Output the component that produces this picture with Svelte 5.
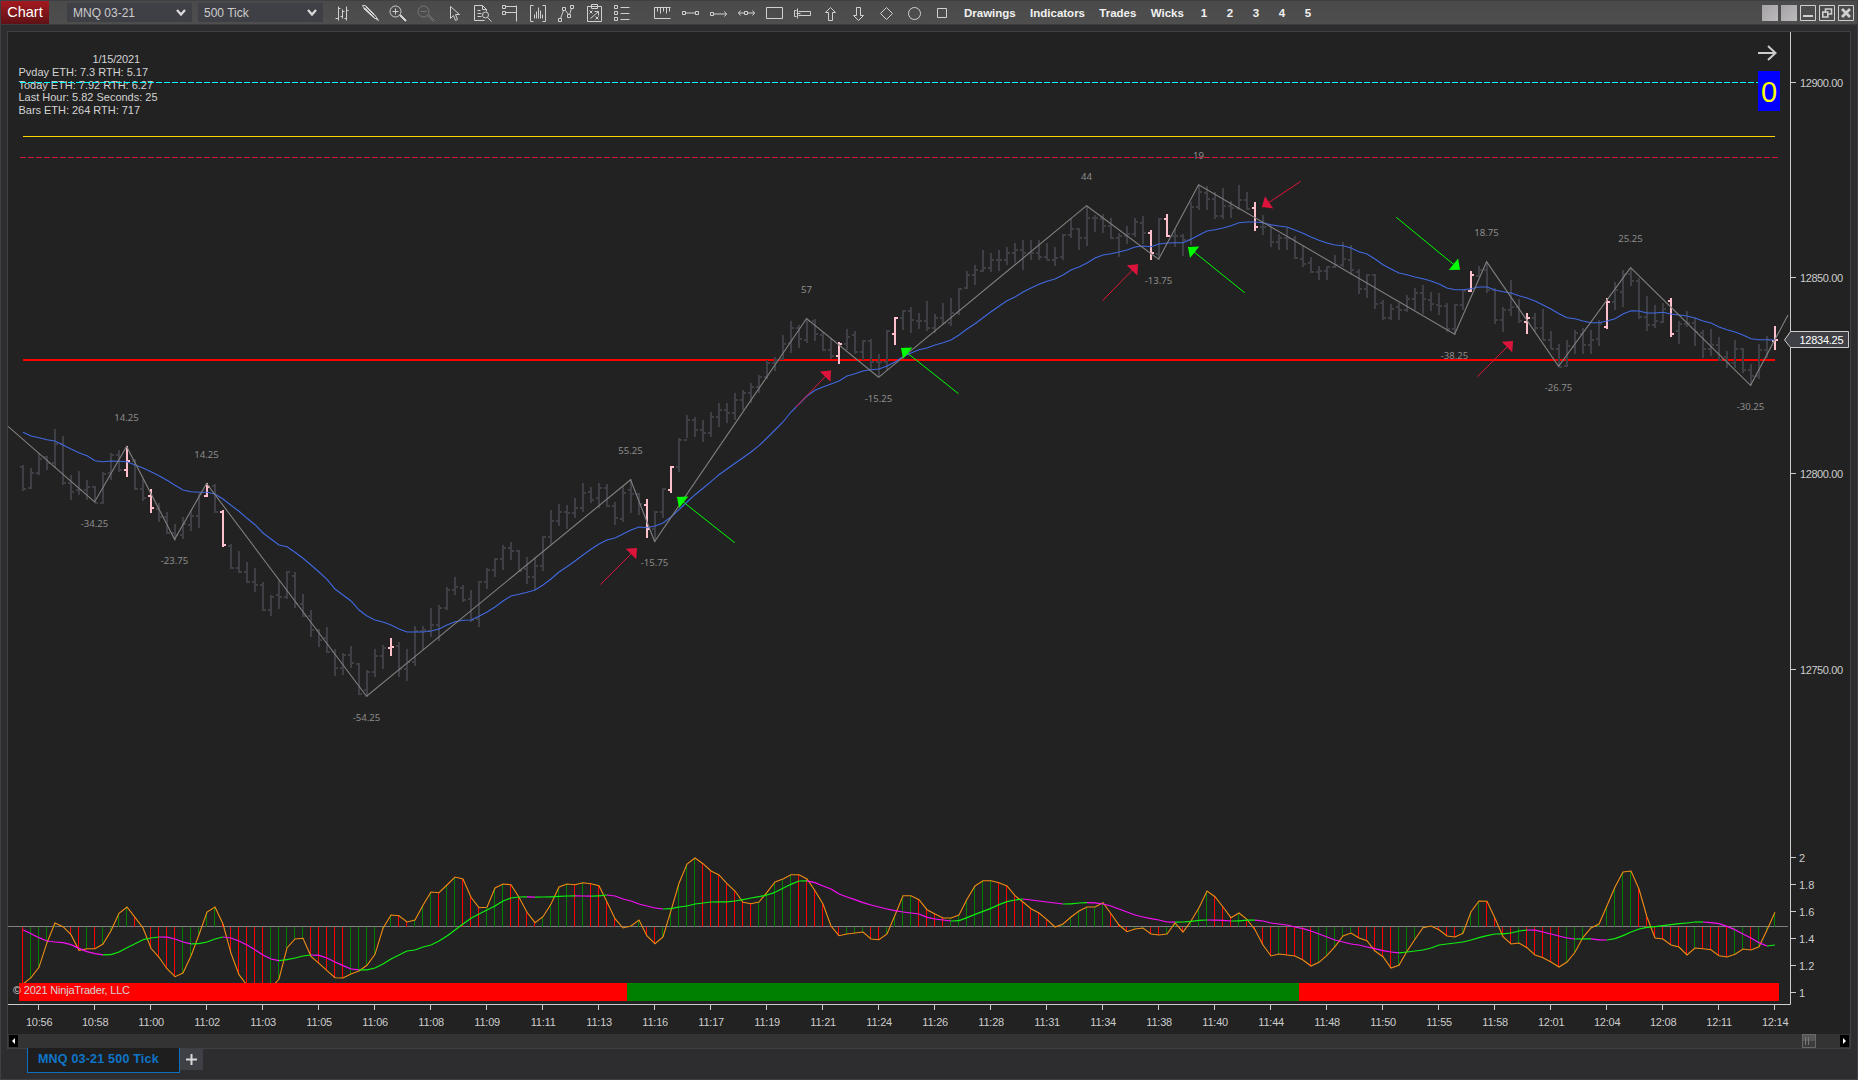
<script lang="ts">
	type Bar = [number, number, number, number];

	const x = (i: number) => 23 + i * 8;

	// [high, low, open, close] in thirds of a pixel below `top`
	const barGroups: { top: number; rows: Bar[] }[] = [
		{
			top: 400,
			rows: [
				[196, 272, 201, 268], [204, 266, 264, 219], [160, 224, 219, 177], [168, 210, 172, 190], [87, 205, 189, 132],
				[108, 254, 132, 249], [225, 299, 249, 275], [213, 284, 270, 270], [240, 300, 269, 261], [259, 309, 261, 309],
				[216, 311, 309, 222], [159, 240, 219, 165], [150, 215, 165, 210], [138, 231, 210, 184], [177, 269, 184, 267],
				[236, 302, 267, 293], [267, 339, 288, 324], [309, 366, 326, 350], [336, 402, 351, 399], [372, 422, 399, 405],
				[351, 417, 405, 372], [330, 393, 374, 348], [282, 384, 348, 282], [249, 291, 288, 260], [252, 338, 258, 336],
				[330, 441, 336, 435], [432, 506, 438, 504], [453, 518, 504, 516], [486, 548, 516, 546], [503, 575, 546, 555],
				[546, 632, 555, 630], [585, 648, 630, 591], [540, 627, 585, 591], [513, 597, 591, 516], [516, 624, 527, 612],
				[582, 651, 612, 648], [630, 711, 648, 690], [687, 741, 690, 720], [681, 759, 714, 756], [747, 828, 756, 804],
				[759, 825, 804, 765], [738, 803, 765, 789], [789, 885, 792, 882], [810, 890, 870, 816], [747, 831, 815, 768],
				[735, 807, 768, 744], [714, 768, 744, 741], [726, 831, 738, 807], [747, 843, 807, 786]
			]
		},
		{
			top: 440,
			rows: [
				[558, 678, 666, 573], [558, 630, 573, 570], [504, 591, 573, 555], [495, 603, 555, 504], [441, 510, 504, 450],
				[411, 465, 450, 441], [435, 486, 444, 480], [450, 546, 476, 540], [423, 561, 538, 426], [384, 446, 426, 390],
				[354, 411, 390, 357], [315, 390, 357, 324], [306, 360, 324, 333], [330, 396, 333, 393], [351, 432, 388, 411],
				[351, 450, 411, 378], [288, 393, 378, 291], [210, 315, 291, 243], [192, 258, 243, 216], [195, 267, 216, 219],
				[174, 234, 219, 204], [129, 216, 204, 159], [141, 188, 156, 180], [129, 204, 174, 144], [132, 201, 144, 198],
				[186, 255, 198, 234], [138, 246, 237, 159], [117, 219, 150, 162], [159, 224, 162, 192], [177, 294, 195, 267],
				[213, 306, 267, 216], [144, 234, 216, 147], [78, 159, 150, 81]
			]
		},
		{
			top: 260,
			rows: [
				[534, 636, 621, 540], [465, 535, 540, 480], [470, 530, 480, 510], [480, 545, 510, 520], [455, 530, 520, 470],
				[430, 500, 470, 450], [430, 490, 450, 460], [400, 480, 460, 420], [390, 450, 420, 400], [370, 430, 400, 380],
				[345, 400, 380, 351], [300, 356, 351, 309], [291, 333, 309, 299], [225, 300, 297, 252], [183, 279, 249, 204],
				[195, 264, 204, 237], [177, 248, 240, 183], [177, 243, 183, 222], [216, 272, 225, 270], [234, 296, 270, 288],
				[246, 312, 288, 252], [207, 270, 252, 231], [213, 282, 225, 276], [240, 300, 276, 243], [237, 330, 242, 306],
				[282, 351, 306, 306], [210, 330, 306, 213], [171, 255, 222, 174], [150, 210, 174, 153], [141, 219, 153, 180],
				[159, 207, 183, 183], [123, 213, 183, 204], [162, 218, 204, 174], [129, 195, 174, 189], [114, 198, 189, 159],
				[84, 165, 159, 87], [33, 87, 84, 45], [15, 75, 45, 30], [-30, 36, 33, 24], [-20, 36, 24, 0],
				[-30, 33, 0, 0], [-40, 15, 0, -20], [-50, 10, -20, -30], [-60, 30, -30, -20], [-60, 0, -20, -20],
				[-60, 0, -20, -10], [-50, 0, -10, 0], [-40, 18, 0, -5]
			]
		},
		{
			top: 140,
			rows: [
				[282, 360, 351, 285], [234, 294, 285, 267], [264, 330, 267, 294], [198, 318, 294, 234], [225, 276, 234, 234],
				[222, 279, 237, 258], [234, 297, 258, 294], [279, 351, 294, 288], [258, 312, 288, 282], [234, 291, 282, 246],
				[228, 312, 249, 279], [270, 360, 279, 339], [234, 360, 342, 237], [222, 291, 237, 288], [267, 321, 288, 288],
				[282, 348, 288, 300], [186, 315, 300, 201], [135, 210, 201, 156], [138, 210, 159, 177], [156, 237, 177, 228],
				[144, 237, 228, 198], [183, 234, 198, 204], [135, 210, 204, 180], [156, 210, 180, 207], [186, 273, 204, 261],
				[225, 285, 261, 261], [255, 321, 255, 306], [282, 330, 306, 294], [264, 330, 294, 294], [288, 357, 297, 354],
				[318, 381, 357, 372], [351, 399, 369, 396], [378, 420, 396, 393], [378, 420, 393, 381], [345, 384, 380, 375],
				[306, 381, 375, 357], [315, 405, 360, 390], [387, 462, 396, 447], [402, 474, 447, 405], [402, 507, 405, 492],
				[480, 540, 489, 534], [492, 540, 534, 507], [489, 540, 501, 510], [465, 516, 510, 477], [444, 510, 477, 459],
				[435, 522, 459, 477], [456, 513, 480, 492], [459, 525, 495, 498], [489, 576, 498, 567], [492, 585, 567, 495]
			]
		},
		{
			top: 200,
			rows: [
				[270, 330, 315, 273], [213, 276, 273, 225], [198, 231, 228, 210], [186, 279, 210, 270], [264, 372, 270, 360],
				[321, 396, 360, 330], [240, 348, 330, 321], [297, 369, 321, 363], [339, 402, 366, 354], [339, 396, 354, 384],
				[327, 420, 384, 420], [393, 447, 420, 447], [432, 501, 447, 501], [420, 500, 498, 438], [390, 462, 441, 399],
				[384, 462, 402, 435], [390, 462, 435, 420], [360, 438, 417, 372], [294, 387, 381, 306], [246, 330, 306, 270],
				[210, 321, 276, 222], [204, 258, 222, 243], [234, 357, 243, 351], [288, 393, 351, 375], [315, 384, 375, 363],
				[309, 369, 366, 327], [294, 411, 303, 402], [363, 432, 393, 372], [333, 381, 372, 369], [354, 438, 369, 396],
				[390, 474, 399, 447], [387, 468, 447, 435], [411, 483, 435, 480], [453, 504, 471, 489], [420, 504, 489, 447],
				[444, 519, 447, 510], [492, 558, 510, 528], [432, 537, 528, 450], [408, 474, 450, 420], [378, 450, 424, 420]
			]
		}
	];

	const highlighted = new Set([13, 16, 23, 25, 46, 78, 81, 102, 109, 141, 143, 154, 181, 188, 198, 206, 219]);

	const bars = barGroups
		.flatMap((g) => g.rows.map((r) => r.map((v) => Math.round(g.top + v / 3))))
		.map(([h, l, o, c], i) => ({ i, h, l, o, c, hot: highlighted.has(i) }));

	const averageGroups = [
		{
			top: 400,
			rows: [
				97, 108, 113, 119, 123, 135, 147, 158, 167, 182, 185, 183, 184, 185, 195, 204, 215, 227, 241, 256, 270, 275, 277, 277,
				282, 297, 316, 334, 355, 374, 399, 417, 435, 440, 457, 475, 495, 516, 538, 567, 585, 603, 630, 648, 660, 666, 675, 687
			]
		},
		{
			top: 440,
			rows: [
				576, 576, 576, 573, 567, 555, 545, 541, 540, 529, 516, 501, 483, 468, 463, 457, 450, 435, 417, 396, 380, 363, 345,
				328, 312, 300, 294, 282, 270, 261, 263, 258, 249, 231, 209, 186, 164, 145, 125, 104, 87, 70, 53, 36, 17
			]
		},
		{
			top: 260,
			rows: [
				534, 510, 486, 456, 432, 408, 391, 381, 372, 363, 348, 341, 333, 329, 327, 318, 306, 290, 279, 269, 264, 255, 248,
				240, 225, 207, 191, 173, 155, 139, 122, 111, 96, 84, 73, 64, 57
			]
		},
		{
			top: 140,
			rows: [
				405, 390, 381, 369, 354, 345, 341, 336, 330, 321, 318, 320, 312, 309, 308, 308, 298, 285, 273, 269, 264, 257, 248,
				246, 246, 248, 254, 258, 261, 270, 280, 291, 301, 309, 315, 317, 324, 335, 342, 357, 374, 387, 399, 404, 411, 416,
				423, 432, 444
			]
		},
		{
			top: 200,
			rows: [
				269, 269, 266, 261, 261, 270, 275, 279, 287, 294, 303, 315, 327, 341, 353, 356, 363, 368, 368, 363, 356, 342, 332,
				333, 339, 339, 337, 342, 345, 348, 354, 363, 369, 381, 389, 396, 405, 416, 419, 419, 420
			]
		}
	];

	const average = averageGroups
		.flatMap((g) => g.rows.map((v) => g.top + v / 3))
		.map((y, i) => `${x(i)},${y.toFixed(1)}`)
		.join(' ');

	const zigzag =
		'8,426.3 94.6,502 126.6,446.5 174.6,539.3 206.6,483.5 366.6,696.3 630.6,479.7 654.6,541.5 806.6,318.5 878.6,377.3 1086.6,205.7 1158.6,259.3 1198.6,184.7 1454.6,334.3 1486.6,261.7 1558.6,366.3 1630.6,267.7 1750.6,385.3 1788,315';

	const swings: [number, number, string][] = [
		[126.5, 417.5, '14.25'],
		[94.5, 523.5, '-34.25'],
		[206.5, 454.5, '14.25'],
		[174.5, 560.5, '-23.75'],
		[366.5, 717.5, '-54.25'],
		[630.5, 450.5, '55.25'],
		[654.5, 562.5, '-15.75'],
		[806.5, 289.5, '57'],
		[878.5, 398.5, '-15.25'],
		[1086.5, 176.5, '44'],
		[1158.5, 280.5, '-13.75'],
		[1198.5, 155.5, '19'],
		[1454.5, 355.5, '-38.25'],
		[1486.5, 232.5, '18.75'],
		[1558.5, 387.5, '-26.75'],
		[1630.5, 238.5, '25.25'],
		[1750.5, 406.5, '-30.25']
	];

	const arrows = [
		{ from: [600.5, 584.5], to: [637, 548], color: '#dc143c' },
		{ from: [734.7, 542.7], to: [677, 497], color: '#00ff00' },
		{ from: [796, 407], to: [831, 370.5], color: '#dc143c' },
		{ from: [958.5, 393.7], to: [901, 348], color: '#00ff00' },
		{ from: [1102.5, 300.7], to: [1138, 264.3], color: '#dc143c' },
		{ from: [1244.7, 292.7], to: [1188, 247], color: '#00ff00' },
		{ from: [1300.5, 181.5], to: [1262, 207], color: '#dc143c' },
		{ from: [1396.3, 217.3], to: [1460, 269.7], color: '#00ff00' },
		{ from: [1477.3, 376.7], to: [1513, 341], color: '#dc143c' }
	];

	function arrowHead([x1, y1]: number[], [x2, y2]: number[]) {
		const len = Math.hypot(x2 - x1, y2 - y1);
		const ux = (x2 - x1) / len;
		const uy = (y2 - y1) / len;
		const bx = x2 - ux * 8.5;
		const by = y2 - uy * 8.5;
		return `${x2},${y2} ${bx - uy * 7.4},${by + ux * 7.4} ${bx + uy * 7.4},${by - ux * 7.4}`;
	}

	const osc = [
		432, 413, 382, 308, 249, 260, 284, 331, 326, 326.5, 312, 272, 220, 201, 232, 264, 325, 352, 386, 410, 399, 348, 284, 216,
		201, 252, 340, 404, 436, 470, 475, 445, 417, 324, 297, 295, 349, 370, 392, 413, 414, 402, 393, 376, 343, 265, 225, 227,
		246, 240, 196, 156, 158, 135, 111, 117, 172, 203, 202, 144, 132, 134, 172, 217, 248, 230, 192, 141, 132, 134, 128, 131,
		137, 186, 236, 264, 258, 240, 288, 311, 291, 212, 130, 72, 54, 71, 93, 105, 131, 153, 187, 191, 186, 157, 126, 117, 104,
		104.5, 117, 152, 192, 258, 287, 282, 279, 276, 297, 299, 282, 226, 167, 167, 179, 209, 222, 234, 234, 225, 178, 138,
		122.5, 122, 128, 138, 167, 186, 206, 219, 239, 261, 252, 231, 213, 201, 201, 188, 221, 255, 275, 267, 264, 282, 285, 282,
		249, 276, 243, 203, 153, 170, 201, 233, 219, 238, 269, 315, 348, 342, 345, 348, 360, 378, 367, 346, 320, 288, 279, 294,
		302, 333, 350, 384, 376, 334, 298, 263, 258, 269, 288, 291, 280, 215, 183, 183.5, 235, 290, 312, 309, 323, 345, 353, 366,
		381, 366, 337, 292, 264, 252, 197, 141, 96, 93, 147, 231, 294, 297, 315, 321, 345, 324, 326, 329, 347, 351, 343, 327,
		330, 320, 270, 217
	].map((v) => 840 + v / 3);

	const signal = [
		269, 281, 293, 303, 306, 308, 314, 325, 335, 341, 344.5, 344, 336, 323, 311, 299, 294, 291, 291.5, 297, 306, 311.5, 311,
		306, 297, 291, 294, 303, 315, 329, 345, 357, 362, 359, 354, 348, 345, 346, 354, 366, 377, 387, 389.5, 389.4, 384, 372,
		357, 345, 333, 330, 321, 315, 303, 288, 270, 252, 235, 222, 210, 198, 183, 174, 171, 170.9, 171.2, 171, 170.5, 169, 168,
		167.8, 168, 168.3, 167.5, 165, 168, 177, 183, 192, 198, 204, 207, 206, 201, 198, 192, 189, 186, 185.8, 185.6, 183, 179,
		174, 170, 165, 157, 145, 133, 123, 122.5, 128, 138, 147, 162, 171, 179, 188, 195, 201, 207, 212, 216, 219, 222, 232,
		237, 240, 243, 242, 233, 223, 214, 205, 194, 185, 180, 177, 180, 183, 186, 189, 192, 191.5, 189, 188, 188.5, 192, 198,
		207, 216, 225, 231, 236, 240, 246, 246.3, 246, 244, 241, 240, 240.3, 241, 243, 242.5, 240.5, 240.4, 243, 249, 252, 255,
		261, 266, 273, 282, 291, 300, 306, 312, 315, 321, 326, 332, 336, 338.5, 336, 333, 330, 324, 315, 312, 309, 306, 300,
		293, 287, 282, 281.5, 279, 273, 270, 270.5, 276, 282, 288, 294, 297, 296.9, 296.8, 299.5, 300, 296, 287, 276, 267, 262,
		260, 257, 254, 251, 249, 246, 246, 248, 251, 259, 269, 282, 294, 308, 318, 315
	].map((v) => 840 + v / 3);

	const oscLine = osc.map((y, i) => `${x(i)},${y.toFixed(1)}`).join(' ');

	const times = [
		'10:56', '10:58', '11:00', '11:02', '11:03', '11:05', '11:06', '11:08', '11:09', '11:11', '11:13', '11:16', '11:17',
		'11:19', '11:21', '11:24', '11:26', '11:28', '11:31', '11:34', '11:38', '11:40', '11:44', '11:48', '11:50', '11:55',
		'11:58', '12:01', '12:04', '12:08', '12:11', '12:14'
	];

	const prices: [number, string][] = [
		[82, '12900.00'],
		[277, '12850.00'],
		[473, '12800.00'],
		[669, '12750.00']
	];

	const levels: [number, string][] = [
		[857, '2'],
		[884, '1.8'],
		[911, '1.6'],
		[938, '1.4'],
		[965, '1.2'],
		[992, '1']
	];

	const info: [number, number, number, string][] = [
		[92.5, 63, 47.5, '1/15/2021'],
		[18.5, 76, 129.5, 'Pvday ETH: 7.3 RTH: 5.17'],
		[18.5, 89, 134.5, 'Today ETH: 7.92 RTH: 6.27'],
		[18.5, 101, 139, 'Last Hour: 5.82 Seconds: 25'],
		[18.5, 114, 121.5, 'Bars ETH: 264 RTH: 717']
	];

	const tools = [
		'M6 3v14M3 15h3M6 5h2M10 6v9M8 13h2M10 8h2M14 3v14M12 15h2M14 7h2',
		'M2 2h3l9 9 4 6-6-4-9-9zM3 5l10 9M5 3l9 9M4 4l10 10M14 15h3',
		'M12.5 8a5.5 5.5 0 1 1-11 0a5.5 5.5 0 1 1 11 0zM7 5v6M4 8h6M11 12l6 6M12 11l6 6M11.5 11.5l6 6',
		'M12.5 8a5.5 5.5 0 1 1-11 0a5.5 5.5 0 1 1 11 0zM4 8h6M11 12l6 6M12 11l6 6',
		'M6 3v12l3-3 2 5 2-1-2-5h4z',
		'M12 17H2V2h8l4 4v2M10 2v4h4M5 7h3M5 10h4M5 13h4M16 11.5a3 3 0 1 1-6 0a3 3 0 1 1 6 0zM15 14l4 4',
		'M2 2h3v3h-3zM2 8h3v3h-3zM5 3h11M5 9h11M16 2v16',
		'M5 2H2v16h3M14 2h3v16h-3M6 15v-4M8 15V8M10 15V4M12 15V7M14 15v-4',
		'M2 15h3v3h-3zM6 4h3v3h-3zM11 11h3v3h-3zM14 2h3v3h-3zM4 15l3-8M9 7l3 4M13 11l2-6',
		'M3 3h14v15H3zM7 1h6v4H7zM5 7l3 3M8 7l-3 3M10 8h4v4M14 8l-8 7M11 13l3 3M14 13l-3 3',
		'M2 2h3v3h-3zM2 8h3v3h-3zM2 14h3v3h-3zM8 4h9M8 10h9M8 16h9'
	];

	const drawings = [
		'M2 4h16M2 15h16M2 4v11M5 4v4M8 4v6M11 4v4M14 4v6M17 4v4',
		'M2 8h3v3h-3zM15 8h3v3h-3zM5 9.5h10',
		'M2 9h3v3h-3zM5 10.5h13M16 8l2 2.5-2 2.5',
		'M8 8h3v3h-3zM2 9.5h6M11 9.5h7M4 7l-2 2.5 2 2.5M16 7l2 2.5-2 2.5',
		'M2 4h16v11H2z',
		'M6 8h12v4H6M4 7h-2v6h2M5 5v10M4 10h4',
		'M10 4l5 5h-3v8H8V9H5z',
		'M10 17l5-5h-3V4H8v8H5z',
		'M10 4l6 6-6 6-6-6z',
		'M16 10a6 6 0 1 1-12 0a6 6 0 1 1 12 0z',
		'M5 5h9v9H5z'
	];

	const menus = ['Drawings', 'Indicators', 'Trades', 'Wicks'];
	const workspaces = ['1', '2', '3', '4', '5'];
</script>

<div class="window">
	<header class="toolbar">
		<span class="title">Chart</span>
		<div class="select instrument">
			MNQ 03-21
			<svg width="10" height="8" viewBox="0 0 10 8"><path d="M1 1l4 4.5 4-4.5" fill="none" stroke="#dcdcdc" stroke-width="2.2" /></svg>
		</div>
		<div class="select">
			500 Tick
			<svg width="10" height="8" viewBox="0 0 10 8"><path d="M1 1l4 4.5 4-4.5" fill="none" stroke="#dcdcdc" stroke-width="2.2" /></svg>
		</div>

		<div class="icons">
			{#each tools as d, i}
				<button class="icon" class:disabled={i === 3} aria-label="Tool">
					<svg width="20" height="20" viewBox="0 0 20 20"><path {d} transform="translate(.5 .5)" /></svg>
				</button>
			{/each}
		</div>
		<div class="icons drawing">
			{#each drawings as d}
				<button class="icon" aria-label="Drawing">
					<svg width="20" height="20" viewBox="0 0 20 20"><path {d} transform="translate(.5 .5)" /></svg>
				</button>
			{/each}
		</div>

		<nav class="menus">
			{#each menus as menu}
				<span>{menu}</span>
			{/each}
		</nav>
		<nav class="workspaces">
			{#each workspaces as n}
				<span>{n}</span>
			{/each}
		</nav>

		<div class="window-buttons">
			<span class="link"></span>
			<span class="link"></span>
			<svg width="16" height="16" viewBox="0 0 16 16"><path d="M.5 .5h15v15H.5z" /><path d="M3 11h10" stroke-width="2" /></svg>
			<svg width="16" height="16" viewBox="0 0 16 16"><path d="M.5 .5h15v15H.5z" /><path d="M6.5 8V4h6v5H9M3.8 7h5v5h-5z" stroke-width="1.6" /></svg>
			<svg width="16" height="16" viewBox="0 0 16 16"><path d="M.5 .5h15v15H.5z" /><path d="M4 4l8 8M12 4l-8 8" stroke-width="2.8" /></svg>
		</div>
	</header>

	<main class="panel">
		<svg class="chart" width="1842" height="1002" viewBox="8 32 1842 1002">
			<defs>
				<clipPath id="oscillator"><rect x="8" y="840" width="1782" height="143" /></clipPath>
			</defs>

			<!-- Session info -->
			{#each info as [left, y, width, text]}
				<text class="info" x={left} {y} textLength={width}>{text}</text>
			{/each}

			<!-- Price levels -->
			<path d="M20 82.5H1758" stroke="#00ffff" stroke-dasharray="6 2" />
			<path d="M23 136.5H1775" stroke="#ffd700" />
			<path d="M20 157.5H1778" stroke="#dc143c" stroke-dasharray="6 2" />
			<path d="M23 360H1775" stroke="#ff0000" stroke-width="2" />

			<!-- OHLC bars -->
			{#each bars as b (b.i)}
				<path
					class="bar"
					class:hot={b.hot}
					d="M{x(b.i)} {b.h}V{b.l}M{x(b.i) - 3} {b.o}h3M{x(b.i)} {b.c}h3"
				/>
			{/each}

			<polyline points={average} fill="none" stroke="#4169e1" stroke-width="1.1" />
			<polyline points={zigzag} fill="none" stroke="#808080" stroke-width="1.1" />
			{#each swings as [cx, cy, text]}
				<text class="swing" x={cx} y={cy + 3.5}>{text}</text>
			{/each}

			{#each arrows as a}
				<line x1={a.from[0]} y1={a.from[1]} x2={a.to[0]} y2={a.to[1]} stroke={a.color} />
				<polygon points={arrowHead(a.from, a.to)} fill={a.color} />
			{/each}

			<!-- Oscillator -->
			<path d="M8 926.5H1788" stroke="#808080" />
			<g clip-path="url(#oscillator)">
				{#each osc as y, i}
					<path d="M{x(i) - 0.5} 927V{y}" stroke={i > 0 && y <= osc[i - 1] ? '#008000' : '#ff0000'} />
				{/each}
				<polyline points={oscLine} fill="none" stroke="#f08c14" stroke-width="1.1" />
				{#each signal as y, i}
					{#if i > 0}
						<line
							x1={x(i - 1)}
							y1={signal[i - 1]}
							x2={x(i)}
							y2={y}
							stroke={y <= signal[i - 1] ? '#10f010' : '#f810f8'}
							stroke-width="1.2"
						/>
					{/if}
				{/each}
			</g>
			<path d="M19 983h608v18H19zM1299 983h480v18h-480z" fill="#ff0000" />
			<path d="M627 983h672v18H627z" fill="#008000" />
			<text class="info" x="13" y="994" textLength="117">© 2021 NinjaTrader, LLC</text>

			<!-- Axes -->
			<path d="M1790.5 32V1004.5H8" fill="none" stroke="#cccccc" />
			{#each times as time, i}
				<path d="M{38.5 + i * 56} 1005v5" stroke="#cccccc" />
				<text class="tick time" x={39.2 + i * 56} y="1026">{time}</text>
			{/each}
			{#each prices as [y, text]}
				<path d="M1791 {y + 0.5}h5" stroke="#cccccc" />
				<text class="tick" x="1800" y={y + 5} textLength="43">{text}</text>
			{/each}
			{#each levels as [y, text]}
				<path d="M1791 {y + 0.5}h5" stroke="#cccccc" />
				<text class="tick" x="1799" y={y + 5}>{text}</text>
			{/each}

			<path d="M1784.5 340l6-8.5h58v16h-58z" fill="#3f3f46" stroke="#cccccc" />
			<text class="tick current" x="1799.5" y="344" textLength="44">12834.25</text>

			<path d="M1758 53h17M1768 46l7.5 7-7.5 7" fill="none" stroke="#cccccc" stroke-width="2" />
			<rect x="1758" y="71" width="22" height="40" fill="#0000ff" />
			<text class="counter" x="1769" y="101.5">0</text>
		</svg>

		<div class="scrollbar">
			<span class="scroll-end"><svg width="9" height="12" viewBox="0 0 9 12"><path d="M6 3v6L3 6z" fill="#fff" /></svg></span>
			<span class="thumb"></span>
			<span class="scroll-end"><svg width="9" height="12" viewBox="0 0 9 12"><path d="M3 3v6l3-3z" fill="#fff" /></svg></span>
		</div>
	</main>

	<footer class="tabs">
		<span class="tab">MNQ 03-21 500 Tick</span>
		<button class="add" aria-label="Add tab">
			<svg width="11" height="11" viewBox="0 0 11 11"><path d="M5.5 0v11M0 5.5h11" stroke="#d8d8d8" stroke-width="2" /></svg>
		</button>
	</footer>
</div>

<style>
	:global(body) {
		background: #2d2d30;
		overflow: hidden;
	}

	.window {
		box-sizing: border-box;
		width: 1858px;
		height: 1080px;
		display: flex;
		flex-direction: column;
		border: 1px solid #3f3f46;
		background: #2d2d30;
		font-family: 'Liberation Sans', Arial, sans-serif;
	}

	.toolbar {
		display: flex;
		align-items: center;
		height: 23px;
		flex: none;
		padding-right: 3px;
		background: linear-gradient(#4a4a4a, #4e4e4e);
		border-bottom: 1px solid #3a3a3f;
		color: #ccc;
		font-size: 12px;
	}

	.title {
		width: 48px;
		line-height: 23px;
		text-align: center;
		font-size: 14.5px;
		color: #fff;
		background: linear-gradient(#a5191f, #5e1216);
		margin-right: 18px;
	}

	.select {
		display: flex;
		align-items: center;
		justify-content: space-between;
		box-sizing: border-box;
		width: 125px;
		height: 19px;
		padding: 0 6px;
		background: #3f3f46;
	}

	.instrument {
		margin-right: 6px;
	}

	.icons {
		display: flex;
		margin-left: 5px;
	}

	.drawing {
		margin-left: 12px;
	}

	.icon {
		display: flex;
		justify-content: center;
		width: 28px;
		padding: 0;
		border: 0;
		background: none;
	}

	.icon path {
		fill: none;
		stroke: #d0d0d0;
		stroke-width: 1;
	}

	.icon.disabled path {
		stroke: #777;
	}

	.menus,
	.workspaces {
		display: flex;
		font-size: 11.5px;
		font-weight: bold;
		color: #f1f1f1;
	}

	.menus {
		gap: 14.3px;
		margin-left: 8px;
	}

	.workspaces {
		margin-left: 7px;
	}

	.workspaces span {
		width: 26px;
		text-align: center;
	}

	.window-buttons {
		display: flex;
		gap: 3px;
		margin-left: auto;
	}

	.window-buttons path {
		fill: none;
		stroke: #d0d0d0;
	}

	.link {
		width: 16px;
		height: 16px;
		background: linear-gradient(135deg, #a5a2a5, #bdbabd);
	}

	.panel {
		box-sizing: border-box;
		width: 1844px;
		height: 1018px;
		flex: none;
		margin: 6px 0 0 6px;
		border: 1px solid #3f3f46;
		background: #222;
	}

	.chart {
		display: block;
	}

	.info {
		font-size: 11px;
		fill: #d3d3d3;
	}

	.bar {
		fill: none;
		stroke: #3f3f46;
		stroke-width: 2;
	}

	.bar.hot {
		stroke: #ffc0cb;
	}

	.swing {
		font-family: 'Noto Sans', 'Open Sans', sans-serif;
		font-size: 9.6px;
		fill: #8c8c8c;
		text-anchor: middle;
	}

	.tick {
		font-size: 11px;
		fill: #ccc;
	}

	.time {
		text-anchor: middle;
		letter-spacing: -0.2px;
	}

	.current {
		fill: #fff;
	}

	.counter {
		font-size: 29px;
		fill: #ffff00;
		text-anchor: middle;
	}

	.scrollbar {
		display: flex;
		align-items: center;
		height: 14px;
		padding: 0 1px;
		background: #333;
	}

	.scroll-end {
		width: 9px;
		height: 12px;
		background: #000;
	}

	.scroll-end svg {
		display: block;
	}

	.thumb {
		box-sizing: border-box;
		width: 14px;
		height: 14px;
		margin: 0 24px 0 auto;
		border: 1px solid #686868;
		background:
			linear-gradient(#777, #777) 2px 2px / 1px 8px no-repeat,
			linear-gradient(#777, #777) 5px 2px / 1px 8px no-repeat,
			linear-gradient(#555 50%, #3c3c3c 50%);
	}

	.tabs {
		display: flex;
		align-items: flex-start;
		padding-left: 26px;
		margin-top: -1px;
	}

	.tab {
		box-sizing: border-box;
		width: 153px;
		height: 25px;
		padding-left: 10px;
		border: 1px solid #0e70c0;
		border-top: 0;
		background: #1e1e1e;
		color: #0e75c8;
		font-size: 12.5px;
		font-weight: bold;
		letter-spacing: 0.2px;
		line-height: 23px;
	}

	.add {
		display: grid;
		place-items: center;
		width: 23px;
		height: 22px;
		padding: 0;
		border: 0;
		background: #3f3f46;
	}
</style>
